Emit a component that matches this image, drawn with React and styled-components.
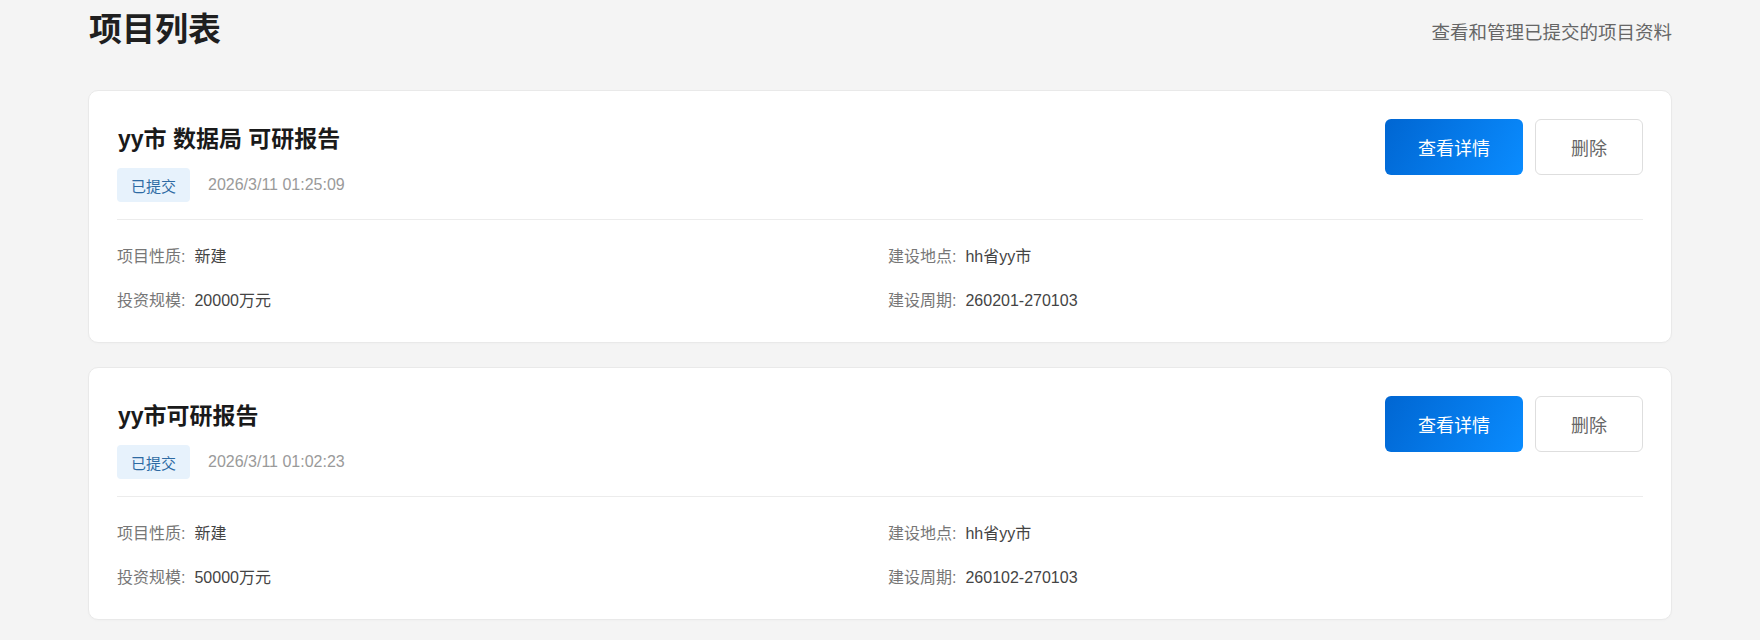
import React from "react";
import styled, { createGlobalStyle } from "styled-components";

const GlobalStyle = createGlobalStyle`
  * { box-sizing: border-box; }
  body {
    margin: 0;
    background: #f4f4f4;
    font-family: "Liberation Sans", "Noto Sans CJK SC", sans-serif;
    color: #333;
  }
`;

const Page = styled.div`
  padding: 8px 88px 24px;
`;

const Header = styled.header`
  display: flex;
  align-items: center;
  justify-content: space-between;
  height: 44px;
  margin-bottom: 38px;
`;

const Heading = styled.h1`
  margin: 0 0 0 1px;
  font-size: 33px;
  line-height: 44px;
  font-weight: 700;
  color: #1f1f1f;
`;

const Subtitle = styled.p`
  margin: 2px 0 0;
  font-size: 18.5px;
  color: #666;
`;

const List = styled.div`
  display: flex;
  flex-direction: column;
  gap: 24px;
`;

const Card = styled.section`
  background: #fff;
  border: 1px solid #e9e9e9;
  border-radius: 10px;
  padding: 28px 28px 30px;
  box-shadow: 0 1px 3px rgba(0, 0, 0, 0.02);
`;

const Top = styled.div`
  display: flex;
  justify-content: space-between;
  align-items: flex-start;
  padding-bottom: 17px;
  border-bottom: 1px solid #ececec;
`;

const TitleBlock = styled.div`
  display: flex;
  flex-direction: column;
  gap: 9px;
`;

const Title = styled.h2`
  margin: 0 0 0 1px;
  font-size: 23px;
  line-height: 40px;
  font-weight: 700;
  color: #1a1a1a;
`;

const Meta = styled.div`
  display: flex;
  align-items: center;
  gap: 18px;
`;

const Badge = styled.span`
  display: inline-flex;
  align-items: center;
  height: 34px;
  padding: 0 14px;
  border-radius: 4px;
  background: #e7f2fc;
  color: #2d6aa3;
  font-size: 15px;
`;

const Time = styled.span`
  font-size: 16px;
  color: #9a9a9a;
`;

const Actions = styled.div`
  display: flex;
  gap: 12px;
`;

const Button = styled.button`
  height: 56px;
  padding: 0 ${(p) => (p.$primary ? 33 : 35)}px;
  border-radius: 6px;
  font-family: inherit;
  font-size: 18px;
  cursor: pointer;
  border: ${(p) => (p.$primary ? "none" : "1px solid #dedede")};
  background: ${(p) =>
    p.$primary ? "linear-gradient(120deg, #0066d2 0%, #0a8cff 100%)" : "#fff"};
  color: ${(p) => (p.$primary ? "#fff" : "#666")};
`;

const Details = styled.div`
  display: grid;
  grid-template-columns: 1fr 1fr;
  column-gap: 16px;
  row-gap: 22px;
  padding-top: 26px;
`;

const Field = styled.div`
  font-size: 16px;
  line-height: 22px;
  color: #444;
`;

const Label = styled.span`
  color: #777;
  margin-right: 9px;
`;

const projects = [
  {
    name: "yy市 数据局 可研报告",
    time: "2026/3/11 01:25:09",
    nature: "新建",
    place: "hh省yy市",
    scale: "20000万元",
    period: "260201-270103",
  },
  {
    name: "yy市可研报告",
    time: "2026/3/11 01:02:23",
    nature: "新建",
    place: "hh省yy市",
    scale: "50000万元",
    period: "260102-270103",
  },
];

function ProjectCard({ project }) {
  return (
    <Card>
      <Top>
        <TitleBlock>
          <Title>{project.name}</Title>
          <Meta>
            <Badge>已提交</Badge>
            <Time>{project.time}</Time>
          </Meta>
        </TitleBlock>
        <Actions>
          <Button $primary>查看详情</Button>
          <Button>删除</Button>
        </Actions>
      </Top>
      <Details>
        <Field><Label>项目性质:</Label>{project.nature}</Field>
        <Field><Label>建设地点:</Label>{project.place}</Field>
        <Field><Label>投资规模:</Label>{project.scale}</Field>
        <Field><Label>建设周期:</Label>{project.period}</Field>
      </Details>
    </Card>
  );
}

export default function App() {
  return (
    <>
      <GlobalStyle />
      <Page>
        <Header>
          <Heading>项目列表</Heading>
          <Subtitle>查看和管理已提交的项目资料</Subtitle>
        </Header>
        <List>
          {projects.map((p) => (
            <ProjectCard key={p.time} project={p} />
          ))}
        </List>
      </Page>
    </>
  );
}
